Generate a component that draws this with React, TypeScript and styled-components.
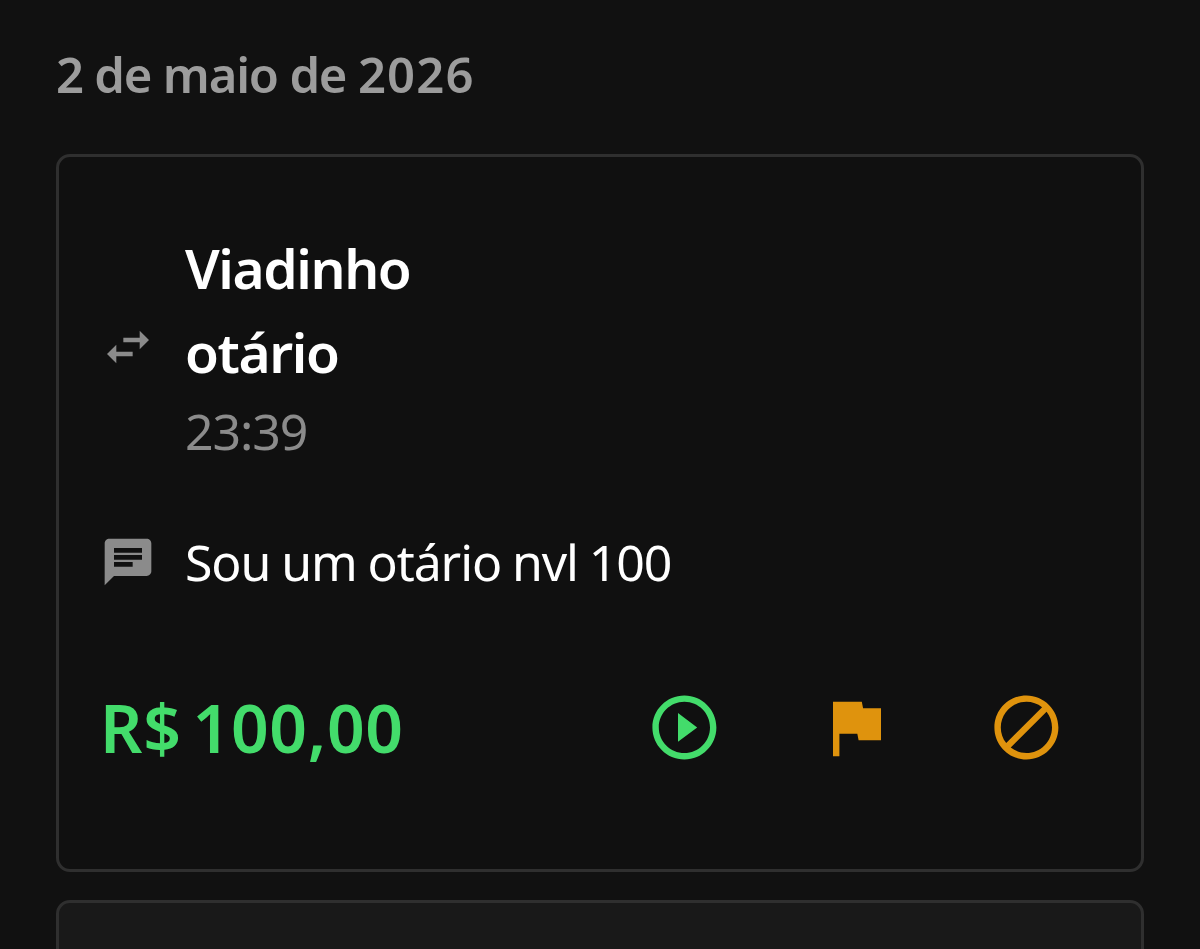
import React from "react";
import styled, { createGlobalStyle } from "styled-components";

const GlobalStyle = createGlobalStyle`
  * { box-sizing: border-box; }
  html, body { margin: 0; height: 949px; overflow: hidden; background: #111111; }
`;

const Page = styled.main`
  height: 949px;
  overflow: hidden;
  padding: 39px 56px 0;
  background: #111111;
  font-family: "Noto Sans", sans-serif;
  display: flex;
  flex-direction: column;
`;

const Label = styled.span<{ $size: number; $line: number; $spacing?: number; $word?: number; $weight?: number; $color?: string }>`
  display: block;
  width: max-content;
  white-space: pre;
  font-size: ${(p) => p.$size}px;
  line-height: ${(p) => p.$line}px;
  letter-spacing: ${(p) => p.$spacing ?? 0}px;
  word-spacing: ${(p) => p.$word ?? 0}px;
  font-weight: ${(p) => p.$weight ?? 400};
  color: ${(p) => p.$color ?? "#ffffff"};
`;

const Year = styled.span`
  letter-spacing: 1.2px;
`;

const DateHeading = styled.header`
  height: 114.5px;
  flex: none;
`;

const Card = styled.section<{ $height: number; $fill: string }>`
  flex: none;
  height: ${(p) => p.$height}px;
  margin-bottom: 28.5px;
  padding: 69.5px 41px 0 41px;
  border: 3px solid #2f2f2f;
  border-radius: 14px;
  background: ${(p) => p.$fill};
`;

const Row = styled.div<{ $height: number }>`
  display: grid;
  grid-template-columns: 56px 1fr;
  column-gap: 29px;
  height: ${(p) => p.$height}px;
`;

const IconSlot = styled.div<{ $top: number }>`
  padding-top: ${(p) => p.$top}px;
  color: #8b8b8b;
`;

const Footer = styled.footer`
  display: flex;
  justify-content: space-between;
  align-items: flex-start;
`;

const Actions = styled.div`
  display: flex;
  gap: 94.2px;
  padding: 0.5px 35px 0 0;
`;

const ActionButton = styled.button<{ $color: string }>`
  padding: 0;
  border: 0;
  background: none;
  color: ${(p) => p.$color};
  line-height: 0;
`;

const Svg = styled.svg<{ $size: number }>`
  display: block;
  width: ${(p) => p.$size}px;
  height: ${(p) => p.$size}px;
  fill: currentColor;
`;

const paths = {
  swap: "M6.99 11L3 15l3.99 4v-3H14v-2H6.99v-3zM21 9l-3.99-4v3H10v2h7.01v3L21 9z",
  chat: "M20 2H4c-1.1 0-1.99.9-1.99 2L2 22l4-4h14c1.1 0 2-.9 2-2V4c0-1.1-.9-2-2-2zM6 9h12v2H6V9zm8 5H6v-2h8v2zm4-6H6V6h12v2z",
  play: "M10 16.5l6-4.5-6-4.5v9zM12 2C6.48 2 2 6.48 2 12s4.48 10 10 10 10-4.48 10-10S17.52 2 12 2zm0 18c-4.41 0-8-3.59-8-8s3.59-8 8-8 8 3.59 8 8-3.59 8-8 8z",
  flag: "M14.4 6L14 4H5v17h2v-7h5.6l.4 2h7V6z",
  block: "M12 2C6.5 2 2 6.5 2 12s4.5 10 10 10 10-4.5 10-10S17.5 2 12 2zM4 12c0-4.4 3.6-8 8-8 1.8 0 3.5.6 4.9 1.7L5.7 16.9C4.6 15.5 4 13.8 4 12zm8 8c-1.8 0-3.5-.6-4.9-1.7L18.3 7.1C19.4 8.5 20 10.2 20 12c0 4.4-3.6 8-8 8z",
};

const Icon = ({ name, size }: { name: keyof typeof paths; size: number }) => (
  <Svg $size={size} viewBox="0 0 24 24" aria-hidden="true">
    <path d={paths[name]} />
  </Svg>
);

export default function App() {
  return (
    <Page>
      <GlobalStyle />
      <DateHeading>
        <Label $size={49} $line={70} $spacing={-1.2} $weight={600} $color="#9c9c9c">2 de maio de <Year>2026</Year></Label>
      </DateHeading>
      <Card $height={718} $fill="#101010">
        <Row $height={307}>
          <IconSlot $top={93}><Icon name="swap" size={56} /></IconSlot>
          <div>
            <Label $size={55} $line={84} $spacing={-1.4} $weight={600}>Viadinho</Label>
            <Label $size={55} $line={84} $spacing={-1.4} $weight={600}>otário</Label>
            <Label $size={50} $line={75} $spacing={-1.1} $color="#8b8b8b">23:39</Label>
          </div>
        </Row>
        <Row $height={155.5}>
          <IconSlot $top={0.5}><Icon name="chat" size={56} /></IconSlot>
          <Label $size={50} $line={59} $spacing={-1.1} $word={-1}>Sou um otário nvl 100</Label>
        </Row>
        <Footer>
          <Label $size={66} $line={77} $spacing={0.7} $word={-7} $weight={600} $color="#43dc6b">R$ 100,00</Label>
          <Actions>
            <ActionButton $color="#43dc6b" aria-label="Reproduzir"><Icon name="play" size={76.8} /></ActionButton>
            <ActionButton $color="#df930d" aria-label="Denunciar"><Icon name="flag" size={76.8} /></ActionButton>
            <ActionButton $color="#df930d" aria-label="Bloquear"><Icon name="block" size={76.8} /></ActionButton>
          </Actions>
        </Footer>
      </Card>
      <Card $height={100} $fill="#191919" />
    </Page>
  );
}
